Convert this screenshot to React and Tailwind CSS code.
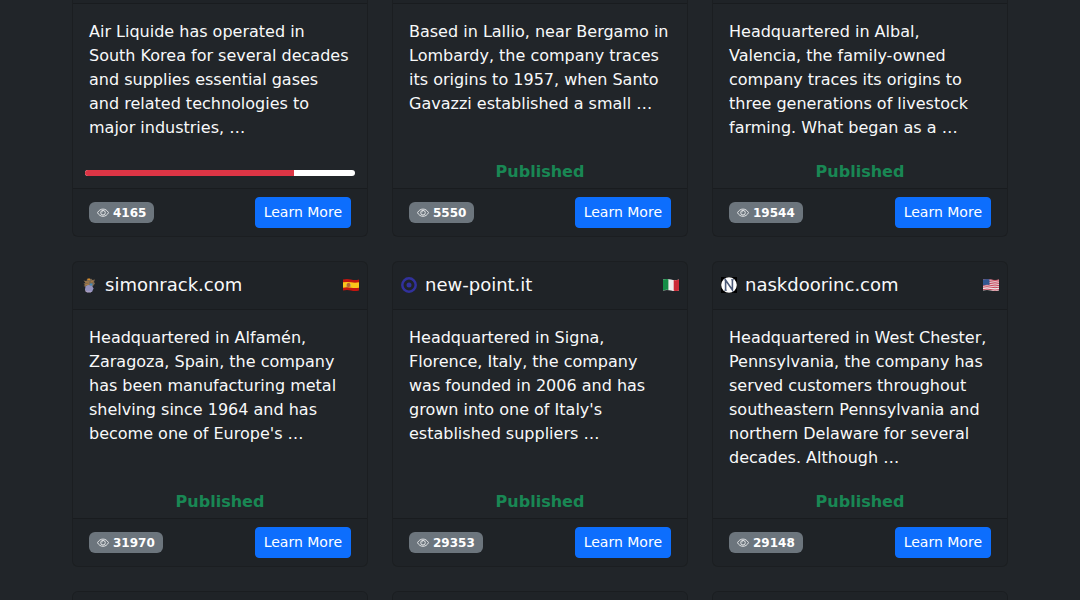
import React from 'react';

const previousSites = [
  {
    text: 'Air Liquide has operated in South Korea for several decades and supplies essential gases and related technologies to major industries, …',
    progress: 77.5,
    views: 4165,
  },
  {
    text: 'Based in Lallio, near Bergamo in Lombardy, the company traces its origins to 1957, when Santo Gavazzi established a small …',
    views: 5550,
  },
  {
    text: 'Headquartered in Albal, Valencia, the family-owned company traces its origins to three generations of livestock farming. What began as a …',
    views: 19544,
  },
];

const sites = [
  {
    name: 'simonrack.com',
    Logo: SimonrackLogo,
    Flag: SpainFlag,
    text: "Headquartered in Alfamén, Zaragoza, Spain, the company has been manufacturing metal shelving since 1964 and has become one of Europe's …",
    views: 31970,
  },
  {
    name: 'new-point.it',
    Logo: NewPointLogo,
    Flag: ItalyFlag,
    text: "Headquartered in Signa, Florence, Italy, the company was founded in 2006 and has grown into one of Italy's established suppliers …",
    views: 29353,
  },
  {
    name: 'naskdoorinc.com',
    Logo: NaskLogo,
    Flag: UsaFlag,
    text: 'Headquartered in West Chester, Pennsylvania, the company has served customers throughout southeastern Pennsylvania and northern Delaware for several decades. Although …',
    views: 29148,
  },
];

function EyeIcon() {
  return (
    <svg viewBox="0 0 12 12" className="w-3 h-3 shrink-0" fill="none" stroke="currentColor" aria-hidden="true">
      <path d="M.5 5.7C1.8 3.3 3.7 2.1 6 2.1s4.2 1.2 5.5 3.6C10.200 8.100 8.300 9.300 6 9.300S1.800 8.100.5 5.700z" strokeWidth="0.8" />
      <circle cx="6" cy="5.700" r="2.300" strokeWidth="0.8" />
      <path d="M4.900 5.600a1.100 1.100 0 0 1 1.100-1.100" strokeWidth="0.5" />
    </svg>
  );
}

function SimonrackLogo() {
  return (
    <svg viewBox="0 0 16 16" className="w-4 h-4 shrink-0" aria-hidden="true">
      <path d="M2.500 3.500l3 .5.500-2 2.500.5 1.500-1 1.500 1.500 2.500-.5-1 2.500 1 1.500-2 2.500-2 1H5L2.500 9l1.500-1-1.500-1.500L4.500 6z" fill="#806a50" />
      <path d="M6 2l3 1M4 5h4M4 8l4-1M10 5l2-1" stroke="#b98440" strokeWidth="0.8" />
      <path d="M7 1.500h2v1.500H7z" fill="#d58b2a" />
      <path d="M4.500 9.500L7 8l4 .5 1.500 3L11 15H6l-2-2.500z" fill="#9391bd" />
      <path d="M8.500 6.500h3v2H9z" fill="#4489b8" />
      <path d="M4 13.500l2 1.500h4" stroke="#b8a8c8" fill="none" />
    </svg>
  );
}

function NewPointLogo() {
  return (
    <svg viewBox="0 0 16 16" className="w-4 h-4 shrink-0" aria-hidden="true">
      <circle cx="8" cy="8" r="6.7" fill="none" stroke="#31319c" strokeWidth="2.5" />
      <circle cx="8" cy="8" r="2.5" fill="#31319c" />
    </svg>
  );
}

function NaskLogo() {
  return (
    <svg viewBox="0 0 16 16" className="w-4 h-4 shrink-0" aria-hidden="true">
      <rect width="16" height="16" fill="#000" />
      <circle cx="8" cy="8" r="7.8" fill="#fff" />
      <path d="M4.6 13.500V3L11.4 13V2.500" fill="none" stroke="#4c5a78" strokeWidth="1.6" />
      <path d="M2.800 2.900h2.200M3.300 13.300h2.600M10 2.700h3" stroke="#4c5a78" strokeWidth="0.8" />
    </svg>
  );
}

function SpainFlag() {
  return (
    <svg viewBox="0 0 16 12" className="w-4 h-3" role="img" aria-label="Spain">
      <path d="M0 .6Q4-.4 8 .6T16 .6V11.4Q12 12.4 8 11.4T0 11.4z" fill="#c3150f" />
      <path d="M0 3.3Q4 2.5 8 3.3T16 3.3V8.7Q12 9.5 8 8.7T0 8.7z" fill="#fbc51a" />
      <rect x="4" y="4" width="3" height="4" rx="1" fill="#b5652f" />
      <path d="M3.5 5v3M7.5 5v3" stroke="#b99a62" strokeWidth="0.7" />
    </svg>
  );
}

function ItalyFlag() {
  return (
    <svg viewBox="0 0 16 12" className="w-4 h-3" role="img" aria-label="Italy">
      <path d="M0 .6Q4-.4 8 .6T16 .6V11.4Q12 12.4 8 11.4T0 11.4z" fill="#eee" />
      <path d="M0 .6Q3-.2 5.4.2V11Q3 10.6 0 11.4z" fill="#148c46" />
      <path d="M10.7 1Q13 1.4 16 .6V11.4Q13 12.2 10.7 11.8z" fill="#cb2b37" />
    </svg>
  );
}

function UsaFlag() {
  return (
    <svg viewBox="0 0 16 12" className="w-4 h-3" role="img" aria-label="United States">
      <path d="M0 .6Q4-.4 8 .6T16 .6V11.4Q12 12.4 8 11.4T0 11.4z" fill="#ece6e8" />
      <path
        d="M0 1Q4 0 8 1T16 1M0 2.8Q4 1.8 8 2.8T16 2.8M0 4.6Q4 3.6 8 4.6T16 4.6M0 6.4Q4 5.4 8 6.4T16 6.4M0 8.2Q4 7.2 8 8.2T16 8.2M0 10.6Q4 9.6 8 10.6T16 10.6"
        fill="none"
        stroke="#c4344b"
        strokeWidth="0.9"
      />
      <path d="M0 .6Q3-.2 6.5.3V6Q3 5.6 0 6.4z" fill="#32568f" />
    </svg>
  );
}

function CardFooter({ views }) {
  return (
    <div className="flex items-center justify-between border-t border-black/18 bg-black/3 px-4 py-2">
      <span className="inline-flex items-center gap-1 rounded-md bg-[#6c757d] px-2 h-[21px] text-xs font-bold text-white">
        <EyeIcon />
        {views}
      </span>
      <a
        href="#"
        className="rounded border border-[#0d6efd] bg-[#0d6efd] px-2 py-1 text-sm leading-[21px] text-white hover:bg-[#0b5ed7]"
      >
        Learn More
      </a>
    </div>
  );
}

function Status({ progress }) {
  if (progress) {
    return (
      <div className="p-3">
        <div className="h-1.5 rounded-md bg-white" role="progressbar" aria-label="Progress" aria-valuenow={progress}>
          <div className="h-full rounded-l-md bg-[#dc3545]" style={{ width: `${progress}%` }} />
        </div>
      </div>
    );
  }
  return <p className="py-1 text-center font-bold text-[#198754]">Published</p>;
}

function SiteCard({ site }) {
  const { name, Logo, Flag, text, progress, views } = site;
  return (
    <article
      className={`flex flex-col border-black/18 ${name ? 'rounded-md border' : 'rounded-b-md border-x border-b'}`}
    >
      {name ? (
        <header className="flex items-center gap-2 border-b border-black/18 bg-black/3 px-2 pb-0.5 h-12">
          <Logo />
          <h5 className="flex-1 text-lg">
            <a href="#">{name}</a>
          </h5>
          <Flag />
        </header>
      ) : (
        <div className="h-1 border-b border-black/18 bg-black/3" />
      )}
      <p className="flex-1 p-4">{text}</p>
      <Status progress={progress} />
      <CardFooter views={views} />
    </article>
  );
}

export default function App() {
  return (
    <div className="h-screen overflow-hidden bg-[#212529] px-3 font-['DejaVu_Sans',sans-serif] text-base text-[#f8f9fa]">
      <main className="mx-auto flex h-full max-w-[936px] flex-col gap-6">
        <div className="grid grid-cols-3 gap-6">
          {previousSites.map((site) => (
            <SiteCard key={site.views} site={site} />
          ))}
        </div>
        <div className="grid grid-cols-3 gap-6">
          {sites.map((site) => (
            <SiteCard key={site.name} site={site} />
          ))}
        </div>
        <div className="grid flex-1 grid-cols-3 gap-6">
          {[0, 1, 2].map((i) => (
            <div key={i} className="rounded-t-md border-x border-t border-black/18 bg-black/3" />
          ))}
        </div>
      </main>
    </div>
  );
}
